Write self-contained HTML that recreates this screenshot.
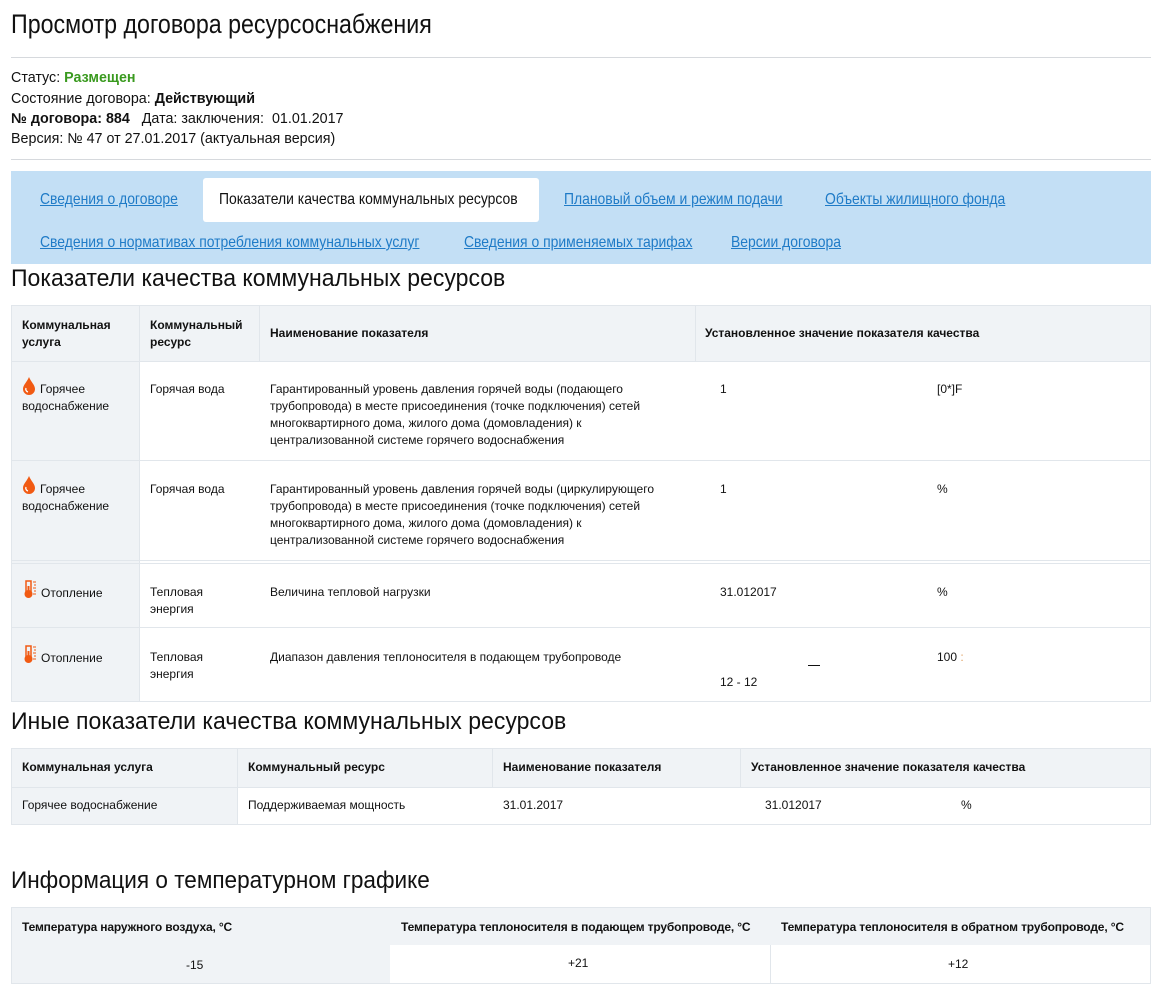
<!DOCTYPE html>
<html><head><meta charset="utf-8"><style>
*{margin:0;padding:0;box-sizing:border-box}
body{width:1170px;height:993px;background:#fff;font-family:"Liberation Sans",Arial,sans-serif;color:#111;position:relative;overflow:hidden}
.a{position:absolute;white-space:nowrap}
.n{transform-origin:0 0}
.h1{font-size:27px;transform:scaleX(0.86)}
.h2{font-size:24px;transform:scaleX(0.96)}
.hr{position:absolute;left:11px;width:1140px;height:1px;background:#d6d9dd}
.tab{font-size:16px;color:#1f7bc7;text-decoration:underline;transform:scaleX(0.87)}
.box{position:absolute;border:1px solid #e1e6eb}
.g{background:#f0f3f6}
.t{font-size:12px;line-height:17px;white-space:normal}
.b{font-weight:bold}
.vl{position:absolute;width:1px;background:#e1e6eb}
.hl{position:absolute;height:1px;background:#e1e6eb}
.i{font-size:14.3px}
</style></head><body>
<div class="a n h1" style="left:11px;top:9px">Просмотр договора ресурсоснабжения</div>
<div class="hr" style="top:57px"></div>
<div class="a i" style="left:11px;top:70px">Статус: <b style="color:#3a9a1f">Размещен</b></div>
<div class="a i" style="left:11px;top:91px">Состояние договора: <b>Действующий</b></div>
<div class="a i" style="left:11px;top:111px"><b>№ договора: 884</b>&nbsp;&nbsp; Дата: заключения:&nbsp; 01.01.2017</div>
<div class="a i" style="left:11px;top:131px">Версия: № 47 от 27.01.2017 (актуальная версия)</div>
<div class="hr" style="top:159px"></div>
<div class="a" style="left:11px;top:171px;width:1140px;height:93px;background:#c3dff5"></div>
<div class="a" style="left:203px;top:178px;width:336px;height:44px;background:#fff;border-radius:3px"></div>
<div class="a n tab" style="left:40px;top:191px">Сведения о договоре</div>
<div class="a n tab" style="left:219px;top:191px;color:#111;text-decoration:none">Показатели качества коммунальных ресурсов</div>
<div class="a n tab" style="left:564px;top:191px">Плановый объем и режим подачи</div>
<div class="a n tab" style="left:825px;top:191px">Объекты жилищного фонда</div>
<div class="a n tab" style="left:40px;top:234px">Сведения о нормативах потребления коммунальных услуг</div>
<div class="a n tab" style="left:464px;top:234px">Сведения о применяемых тарифах</div>
<div class="a n tab" style="left:731px;top:234px">Версии договора</div>

<div class="a n h2" style="left:11px;top:265px">Показатели качества коммунальных ресурсов</div>
<div class="box" style="left:11px;top:305px;width:1140px;height:397px"></div>
<div class="a g" style="left:12px;top:306px;width:1138px;height:55px"></div>
<div class="a g" style="left:12px;top:361px;width:127px;height:340px"></div>
<div class="vl" style="left:139px;top:305px;height:397px"></div>
<div class="vl" style="left:259px;top:305px;height:56px"></div>
<div class="vl" style="left:695px;top:305px;height:56px"></div>
<div class="hl" style="left:11px;top:361px;width:1140px"></div>
<div class="hl" style="left:11px;top:460px;width:1140px"></div>
<div class="hl" style="left:11px;top:560px;width:1140px"></div>
<div class="hl" style="left:11px;top:563px;width:1140px"></div>
<div class="hl" style="left:11px;top:627px;width:1140px"></div>
<div class="a t b" style="left:22px;top:317px;width:110px">Коммунальная услуга</div>
<div class="a t b" style="left:150px;top:317px;width:105px">Коммунальный ресурс</div>
<div class="a t b" style="left:270px;top:325px">Наименование показателя</div>
<div class="a t b" style="left:705px;top:325px">Установленное значение показателя качества</div>

<svg class="a" style="left:22px;top:377px" width="14" height="18" viewBox="0 0 14 18"><path d="M7 0C5 5 1 8 1 12a6 6 0 0 0 12 0C13 8 9 5 7 0z" fill="#f15a13"/><path d="M4 11a3 3 0 0 0 2 4" stroke="#fff" stroke-width="1.3" fill="none"/></svg>
<div class="a t" style="left:22px;top:381px;width:110px;text-indent:18px">Горячее водоснабжение</div>
<div class="a t" style="left:150px;top:381px">Горячая вода</div>
<div class="a t" style="left:270px;top:381px;width:400px">Гарантированный уровень давления горячей воды (подающего трубопровода) в месте присоединения (точке подключения) сетей многоквартирного дома, жилого дома (домовладения) к централизованной системе горячего водоснабжения</div>
<div class="a t" style="left:720px;top:381px">1</div>
<div class="a t" style="left:937px;top:381px">[0*]F</div>

<svg class="a" style="left:22px;top:476px" width="14" height="18" viewBox="0 0 14 18"><path d="M7 0C5 5 1 8 1 12a6 6 0 0 0 12 0C13 8 9 5 7 0z" fill="#f15a13"/><path d="M4 11a3 3 0 0 0 2 4" stroke="#fff" stroke-width="1.3" fill="none"/></svg>
<div class="a t" style="left:22px;top:481px;width:110px;text-indent:18px">Горячее водоснабжение</div>
<div class="a t" style="left:150px;top:481px">Горячая вода</div>
<div class="a t" style="left:270px;top:481px;width:400px">Гарантированный уровень давления горячей воды (циркулирующего трубопровода) в месте присоединения (точке подключения) сетей многоквартирного дома, жилого дома (домовладения) к централизованной системе горячего водоснабжения</div>
<div class="a t" style="left:720px;top:481px">1</div>
<div class="a t" style="left:937px;top:481px">%</div>

<svg class="a" style="left:22px;top:580px" width="16" height="19" viewBox="0 0 16 19"><rect x="4" y="1" width="5" height="12" fill="none" stroke="#f15a13" stroke-width="1.5"/><circle cx="6.5" cy="14" r="4" fill="#f15a13"/><rect x="5.5" y="6" width="2" height="8" fill="#f15a13"/><path d="M11 2h3M12 5h2M11 8h3M12 11h2M11 14h3" stroke="#f15a13" stroke-width="1"/></svg>
<div class="a t" style="left:41px;top:585px">Отопление</div>
<div class="a t" style="left:150px;top:584px;width:90px">Тепловая энергия</div>
<div class="a t" style="left:270px;top:584px">Величина тепловой нагрузки</div>
<div class="a t" style="left:720px;top:584px">31.012017</div>
<div class="a t" style="left:937px;top:584px">%</div>

<svg class="a" style="left:22px;top:645px" width="16" height="19" viewBox="0 0 16 19"><rect x="4" y="1" width="5" height="12" fill="none" stroke="#f15a13" stroke-width="1.5"/><circle cx="6.5" cy="14" r="4" fill="#f15a13"/><rect x="5.5" y="6" width="2" height="8" fill="#f15a13"/><path d="M11 2h3M12 5h2M11 8h3M12 11h2M11 14h3" stroke="#f15a13" stroke-width="1"/></svg>
<div class="a t" style="left:41px;top:650px">Отопление</div>
<div class="a t" style="left:150px;top:649px;width:90px">Тепловая энергия</div>
<div class="a t" style="left:270px;top:649px">Диапазон давления теплоносителя в подающем трубопроводе</div>
<div class="a" style="left:808px;top:665px;width:12px;height:1px;background:#111"></div>
<div class="a t" style="left:720px;top:674px">12 - 12</div>
<div class="a t" style="left:937px;top:649px">100 <span style="color:#e0a060">:</span></div>

<div class="a n h2" style="left:11px;top:708px">Иные показатели качества коммунальных ресурсов</div>
<div class="box" style="left:11px;top:748px;width:1140px;height:77px"></div>
<div class="a g" style="left:12px;top:749px;width:1138px;height:38px"></div>
<div class="a g" style="left:12px;top:787px;width:225px;height:37px"></div>
<div class="hl" style="left:11px;top:787px;width:1140px"></div>
<div class="vl" style="left:237px;top:748px;height:77px"></div>
<div class="vl" style="left:492px;top:748px;height:39px"></div>
<div class="vl" style="left:740px;top:748px;height:39px"></div>
<div class="a t b" style="left:22px;top:759px">Коммунальная услуга</div>
<div class="a t b" style="left:248px;top:759px">Коммунальный ресурс</div>
<div class="a t b" style="left:503px;top:759px">Наименование показателя</div>
<div class="a t b" style="left:751px;top:759px">Установленное значение показателя качества</div>
<div class="a t" style="left:22px;top:797px">Горячее водоснабжение</div>
<div class="a t" style="left:248px;top:797px">Поддерживаемая мощность</div>
<div class="a t" style="left:503px;top:797px">31.01.2017</div>
<div class="a t" style="left:765px;top:797px">31.012017</div>
<div class="a t" style="left:961px;top:797px">%</div>

<div class="a n h2" style="left:11px;top:867px;transform:scaleX(0.94)">Информация о температурном графике</div>
<div class="box" style="left:11px;top:907px;width:1140px;height:77px"></div>
<div class="a g" style="left:12px;top:908px;width:1138px;height:37px"></div>
<div class="a g" style="left:12px;top:945px;width:378px;height:38px"></div>
<div class="vl" style="left:770px;top:945px;height:38px"></div>
<div class="a t b" style="left:22px;top:919px;letter-spacing:-0.15px">Температура наружного воздуха, °C</div>
<div class="a t b" style="left:401px;top:919px;letter-spacing:-0.15px">Температура теплоносителя в подающем трубопроводе, °C</div>
<div class="a t b" style="left:781px;top:919px;letter-spacing:-0.15px">Температура теплоносителя в обратном трубопроводе, °C</div>
<div class="a t" style="left:186px;top:957px">-15</div>
<div class="a t" style="left:568px;top:955px">+21</div>
<div class="a t" style="left:948px;top:956px">+12</div>
</body></html>
